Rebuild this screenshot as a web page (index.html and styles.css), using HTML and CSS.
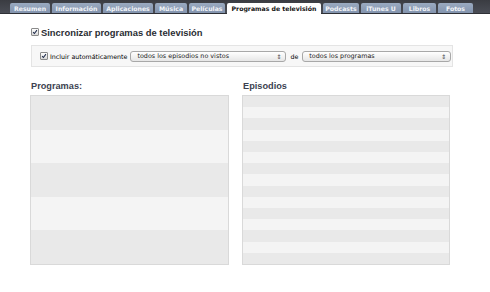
FILE: index.html
```html
<!DOCTYPE html>
<html lang="es">
<head>
    <meta charset="UTF-8">
    <title>Programas de televisión</title>
    <link rel="stylesheet" href="styles.css">
</head>
<body>

<div class="tabbar">
    <span class="tab w-resumen">Resumen</span>
    <span class="tab w-info">Información</span>
    <span class="tab w-apps">Aplicaciones</span>
    <span class="tab w-musica">Música</span>
    <span class="tab w-peliculas">Películas</span>
    <span class="tab selected w-tv">Programas de televisión</span>
    <span class="tab w-podcasts">Podcasts</span>
    <span class="tab w-itunesu">iTunes U</span>
    <span class="tab w-libros">Libros</span>
    <span class="tab w-fotos">Fotos</span>
</div>

<div class="content">
    <div class="sync-title">
        <span class="check"><svg viewBox="0 0 8 8"><path d="M1.5 4.2 L3.2 6 L6.6 1.5" /></svg></span>
        Sincronizar programas de televisión
    </div>

    <div class="options">
        <span class="check"><svg viewBox="0 0 8 8"><path d="M1.5 4.2 L3.2 6 L6.6 1.5" /></svg></span>
        <span class="label">Incluir automáticamente</span>
        <div class="popup w-episodes">todos los episodios no vistos<span class="arrows">&#8661;</span></div>
        <span class="label de">de</span>
        <div class="popup w-shows">todos los programas<span class="arrows">&#8661;</span></div>
    </div>

    <div class="lists">
        <div class="column col-shows">
            <h3>Programas:</h3>
            <div class="listbox">
                <div class="row"></div>
                <div class="row"></div>
                <div class="row"></div>
                <div class="row"></div>
                <div class="row"></div>
            </div>
        </div>
        <div class="column col-episodes">
            <h3>Episodios</h3>
            <div class="listbox">
                <div class="row"></div><div class="row"></div><div class="row"></div>
                <div class="row"></div><div class="row"></div><div class="row"></div>
                <div class="row"></div><div class="row"></div><div class="row"></div>
                <div class="row"></div><div class="row"></div><div class="row"></div>
                <div class="row"></div><div class="row"></div><div class="row"></div>
            </div>
        </div>
    </div>
</div>

</body>
</html>
```

FILE: styles.css
```css
body {
    margin: 0;
    padding: 0;
    background-color: #ffffff;
    font-family: "DejaVu Sans", "Liberation Sans", sans-serif;
    width: 490px;
    height: 292px;
    overflow: hidden;
}

.tabbar {
    display: flex;
    align-items: flex-end;
    gap: 2px;
    height: 14px;
    padding-left: 10px;
    background: linear-gradient(#3a3c42, #4a4d55);
    border-bottom: 1px solid #2e3036;
    box-sizing: border-box;
}

.tab {
    display: flex;
    align-items: center;
    justify-content: center;
    height: 10px;
    background: linear-gradient(#9aaac0, #8394ae);
    border-radius: 2px 2px 0 0;
    color: #f2f4f8;
    font-size: 6.2px;
    font-weight: bold;
    white-space: nowrap;
}

.tab.selected {
    height: 11px;
    margin-bottom: -1px;
    background: #ffffff;
    color: #111111;
}

.w-resumen { width: 40px; }
.w-info { width: 49px; }
.w-apps { width: 50px; }
.w-musica { width: 32px; }
.w-peliculas { width: 36px; }
.w-tv { width: 94px; }
.w-podcasts { width: 36px; }
.w-itunesu { width: 40px; }
.w-libros { width: 33px; }
.w-fotos { width: 35px; }

.content {
    padding: 0 0 0 31px;
}

.sync-title {
    display: flex;
    align-items: center;
    gap: 2px;
    margin-top: 12px;
    height: 12px;
    font-family: "Liberation Sans", Arial, sans-serif;
    font-size: 9.4px;
    font-weight: bold;
    color: #2a2d33;
}

.check {
    display: inline-flex;
    width: 6px;
    height: 6px;
    border: 1px solid #8a8a8a;
    background: linear-gradient(#ffffff, #d8d8d8);
    border-radius: 1px;
}

.check svg {
    width: 6px;
    height: 6px;
    fill: none;
    stroke: #1e2a4a;
    stroke-width: 1.4;
}

.options {
    display: flex;
    align-items: center;
    width: 422px;
    height: 22px;
    margin-top: 7px;
    padding-left: 8px;
    box-sizing: border-box;
    background-color: #f7f7f7;
    border: 1px solid #e4e4e4;
}

.options .label {
    margin-left: 2px;
    font-size: 6.3px;
    color: #000000;
}

.options .de {
    margin: 0 4px 0 4px;
}

.popup {
    position: relative;
    display: flex;
    align-items: center;
    height: 11px;
    margin-left: 3px;
    padding-left: 6px;
    box-sizing: border-box;
    background: linear-gradient(#ffffff, #e6e6e6);
    border: 1px solid #a8a8a8;
    border-radius: 3px;
    font-size: 6.4px;
    color: #1a1a1a;
}

.w-episodes { width: 156px; }
.w-shows { width: 149px; margin-left: 0; }

.arrows {
    position: absolute;
    right: 4px;
    top: 0;
    font-size: 6px;
    line-height: 9px;
    color: #444444;
}

.lists {
    display: flex;
    gap: 13px;
    margin-top: 14px;
    margin-left: -1px;
}

.column h3 {
    margin: 0 0 3px 1px;
    height: 11px;
    font-family: "Liberation Sans", Arial, sans-serif;
    font-size: 9.2px;
    font-weight: bold;
    color: #3c4250;
}

.col-shows .listbox { width: 199px; }
.col-episodes .listbox { width: 208px; }

.listbox {
    display: flex;
    flex-direction: column;
    height: 170px;
    box-sizing: border-box;
    border: 1px solid #d9d9d9;
}

.row {
    flex: 1;
    background-color: #e9e9e9;
}

.row:nth-child(even) {
    background-color: #f4f4f4;
}
```
